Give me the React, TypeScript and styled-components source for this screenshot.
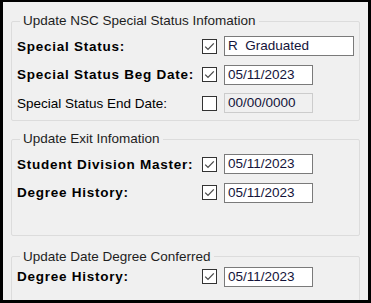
import styled, { createGlobalStyle } from "styled-components"

const GlobalStyle = createGlobalStyle`
	html,
	body {
		margin: 0;
		padding: 0;
		background: #000;
	}
	* {
		box-sizing: border-box;
	}
`

type CheckProps = {
	checked: boolean
}

const CheckBox = ({ checked }: CheckProps) => (
	<CheckFrame>
		{checked && (
			<svg width="13" height="13" viewBox="0 0 13 13">
				<path d="M2.2 6.6 L5 9.4 L10.8 3.4" fill="none" stroke="#4a4a4a" strokeWidth="1.3" />
			</svg>
		)}
	</CheckFrame>
)

type RowProps = {
	label: string
	bold?: boolean
	checked: boolean
	value: string
	wide?: boolean
	disabled?: boolean
}

const FieldRow = ({ label, bold = true, checked, value, wide, disabled }: RowProps) => (
	<Row>
		<Label $bold={bold}>{label}</Label>
		<CheckBox checked={checked} />
		<TextBox $wide={wide} $disabled={disabled}>
			{value}
		</TextBox>
	</Row>
)

const App = () => {
	return (
		<Frame>
			<GlobalStyle />
			<Panel>
				<Group $top={11} $inset={7} $bottom={7}>
					<Legend>Update NSC Special Status Infomation</Legend>
					<FieldRow label="Special Status:" checked value={"R\u00a0\u00a0Graduated"} wide />
					<FieldRow label="Special Status Beg Date:" checked value="05/11/2023" />
					<FieldRow label="Special Status End Date:" bold={false} checked={false} value="00/00/0000" disabled />
				</Group>
				<Group $top={10} $inset={7} $bottom={32}>
					<Legend>Update Exit Infomation</Legend>
					<FieldRow label="Student Division Master:" checked value="05/11/2023" />
					<FieldRow label="Degree History:" checked value="05/11/2023" />
				</Group>
				<Group $top={13} $inset={2} $bottom={20}>
					<Legend>Update Date Degree Conferred</Legend>
					<FieldRow label="Degree History:" checked value="05/11/2023" />
				</Group>
			</Panel>
		</Frame>
	)
}

export default App

const Frame = styled.div`
	width: 371px;
	height: 303px;
	background: #000;
	padding: 2px 3px 3px 3px;
`

const Panel = styled.div`
	height: 100%;
	background: #f0f0f0;
	padding: 0 8px;
	overflow: hidden;
	font-family: "Liberation Sans", Arial, sans-serif;
	font-size: 13.5px;
	color: #111;
`

const Group = styled.fieldset<{ $top: number; $inset: number; $bottom: number }>`
	margin: ${({ $top }) => $top}px 0 0 0;
	padding: ${({ $inset }) => $inset}px 0 ${({ $bottom }) => $bottom}px 5px;
	border: 1px solid #dcdcdc;
	border-radius: 2px;
	display: flex;
	flex-direction: column;
	gap: 8.5px;
	min-width: 0;
`

const Legend = styled.legend`
	margin-left: 3px;
	padding: 0 3px;
	line-height: 16px;
	color: #1e1e1e;
`

const Row = styled.div`
	display: flex;
	align-items: center;
	height: 20px;
`

const Label = styled.span<{ $bold: boolean }>`
	width: 185px;
	font-weight: ${({ $bold }) => ($bold ? 700 : 400)};
	letter-spacing: ${({ $bold }) => ($bold ? "0.75px" : "0")};
	color: #000;
	white-space: nowrap;
`

const CheckFrame = styled.span`
	width: 15px;
	height: 15px;
	border: 1px solid #333;
	background: #fff;
	display: flex;
	align-items: center;
	justify-content: center;
	margin-right: 7px;
`

const TextBox = styled.div<{ $wide?: boolean; $disabled?: boolean }>`
	width: ${({ $wide }) => ($wide ? "130px" : "89px")};
	height: 20px;
	border: 1px solid ${({ $disabled }) => ($disabled ? "#cccccc" : "#7a7a7a")};
	background: ${({ $disabled }) => ($disabled ? "#f0f0f0" : "#fff")};
	padding: 0 3px;
	line-height: 18px;
	color: #14143a;
	white-space: nowrap;
`
